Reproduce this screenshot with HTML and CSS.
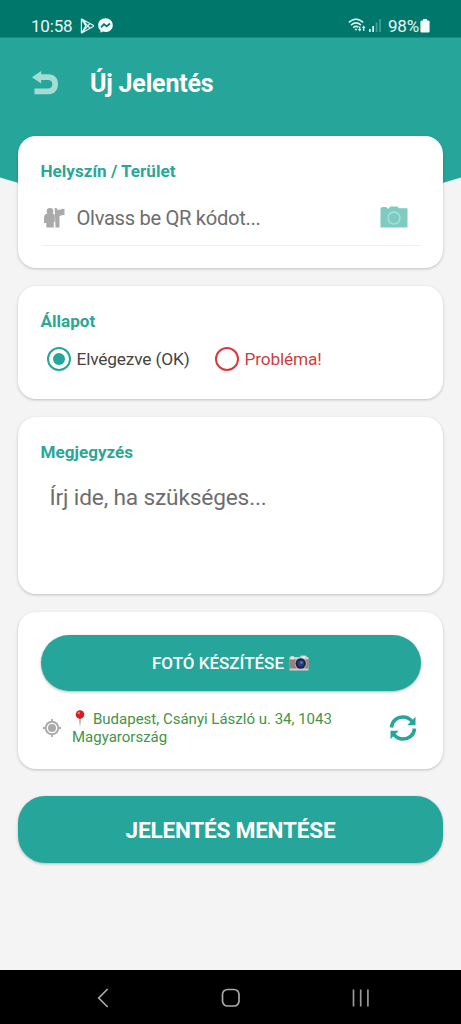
FILE: index.html
```html
<!DOCTYPE html>
<html lang="hu">
<head>
<meta charset="utf-8">
<meta name="viewport" content="width=device-width, initial-scale=1">
<title>Új Jelentés</title>
<link rel="stylesheet" href="styles.css">
</head>
<body>
<div class="screen">
  <div class="status-bar">
    <span class="clock">10:58</span>
    <svg class="play-icon" width="15" height="16" viewBox="0 0 16 17" fill="none" stroke="#e3f5f2" stroke-width="1.300" stroke-linejoin="round"><path d="M1.500 1.500Q1.500 .8 2.300 1.200L14 7.800Q14.800 8.400 14 9L2.300 15.800Q1.500 16.200 1.500 15.300ZM2 1.500L10.500 10.800M2 15.500L10.500 6M2 1.500L6.200 8.400L2 15.500"/></svg>
    <svg class="messenger-icon" width="15" height="15" viewBox="0 0 15 15"><path fill="#f2fbfa" d="M7.500.2C3.200.2.200 3.200.200 7.200c0 2.200.8 3.900 2.300 5.200v2.300l2.200-1.100c.9.200 1.800.4 2.800.4 4.300 0 7.300-2.900 7.300-6.800S11.800.2 7.500.2Z"/><path d="M3 9.300L6 6.100L8.700 8.400L12 5.500" fill="none" stroke="#00776b" stroke-width="1.700"/></svg>
    <span class="spacer"></span>
    <svg class="wifi-icon" width="19" height="15" viewBox="0 0 19 15" fill="none" stroke="#d8efec" stroke-width="1.500"><path d="M.8 4.400Q8 -2.200 15.200 4.400M3 7.100Q8 2.600 13 7.100M5.200 9.600Q8 7.200 10.500 9.400"/><path d="M6.500 11.200Q8 10 9.300 11.200L8 12.700Z" fill="#d8efec" stroke="none"/><path d="M11.700 8.500V12.500M15.700 13V9" stroke-width="1.300"/><path d="M9.800 11h3.800l-1.900 2.500ZM13.800 10h3.800l-1.900-2.500Z" fill="#d8efec" stroke="none"/></svg>
    <svg class="signal-icon" width="12" height="13" viewBox="0 0 12 13"><path d="M0 10h1.700v3H0ZM3.300 7H5v6H3.300Z" fill="#e3f5f2"/><path d="M6.700 3.500h1.700V13H6.700ZM10.200 0h1.700v13h-1.700Z" fill="#459f96"/></svg>
    <span class="battery-level">98%</span>
    <svg class="battery-icon" width="10" height="14" viewBox="0 0 10 14"><path d="M3 0h4v1.500h1.300Q9.600 1.500 9.600 2.800V12.200Q9.600 13.500 8.300 13.500H1.700Q.4 13.500.4 12.200V2.800Q.4 1.500 1.700 1.500H3Z" fill="#f2fbfa"/></svg>
  </div>

  <header class="app-header">
    <svg class="back-icon" width="27" height="24" viewBox="0 0 27 24"><path d="M0 6.300L9.200 0V3.200H16.500C22.500 3.200 26 7 26 13C26 19.500 22.300 23.200 16.500 23.200H2.500V17.500H16C19 17.500 20.300 16 20.300 13.300C20.300 10.500 18.900 9 16 9H9.200V12.500Z" fill="#a4dcd3"/></svg>
    <h1 class="title">Új Jelentés</h1>
  </header>

  <main class="content">
    <section class="card location-card">
      <h2 class="label">Helyszín / Terület</h2>
      <div class="scan-row">
        <svg class="guide-icon" width="21" height="20" viewBox="0 0 21 20" fill="#aaa"><circle cx="6" cy="3.300" r="3.300"/><path d="M3 5.500H9Q10.800 5.800 10.800 7.500V14H9.800V19.500H2.300V15H0V10Q0 6 3 5.500Z"/><path d="M10.700 0h2.200v1.200Q15 2.400 17 1.200Q18.500.2 20.500 1.100V7.200Q18.500 6.500 17 7.500L15.500 8V19.500H11.500Z"/></svg>
        <span class="scan-hint">Olvass be QR kódot...</span>
        <svg class="camera-icon" width="28" height="22" viewBox="0 0 28 22"><path d="M.5 2.500L2 1H6L7.500 2.500H9L10 .4H17.500L19 2.300H27.500V21.500H.5Z" fill="#7fcbc2"/><circle cx="14" cy="12" r="6" fill="none" stroke="#a7e3db" stroke-width="1.300"/></svg>
      </div>
    </section>

    <section class="card status-card">
      <h2 class="label">Állapot</h2>
      <div class="options">
        <span class="option"><span class="radio radio-selected"></span>Elvégezve (OK)</span>
        <span class="option option-problem"><span class="radio"></span>Probléma!</span>
      </div>
    </section>

    <section class="card note-card">
      <h2 class="label">Megjegyzés</h2>
      <p class="note-hint">Írj ide, ha szükséges...</p>
    </section>

    <section class="card photo-card">
      <div class="photo-button">
        <span>FOTÓ KÉSZÍTÉSE</span>
        <svg class="photo-icon" width="20" height="16" viewBox="0 0 20 16"><path d="M1.500 1H5V2H11L12 .5H17L18 2H19.500V15.500H.5V2H1.500Z" fill="#d2cdca"/><path d="M.5 4.500H19.500V13.500H.5Z" fill="#95817a"/><path d="M2 2.500H5V4H2ZM13 1.500H16V3H13Z" fill="#f5f0ea"/><circle cx="11.700" cy="8.500" r="6" fill="#c5bbc5"/><circle cx="11.700" cy="8.500" r="5.200" fill="#202143"/><circle cx="11.700" cy="8.500" r="3.200" fill="#253e83"/><circle cx="12.400" cy="7.500" r="1.300" fill="#4d86c0"/></svg>
      </div>
      <div class="address-row">
        <svg class="target-icon" width="18" height="18" viewBox="0 0 18 18" fill="none" stroke="#aaa"><circle cx="9" cy="9" r="6.300" stroke-width="1.900"/><circle cx="9" cy="9" r="4" fill="#aaa" stroke="none"/><path d="M9 0V3M9 15V18M0 9H3M15 9H18" stroke-width="1.800"/></svg>
        <p class="address"><svg class="pin-icon" width="10" height="16" viewBox="0 0 10 16"><path d="M4.300 8H5.700L5.300 15.500H4.700Z" fill="#8b9094"/><circle cx="5" cy="4.500" r="4.300" fill="#d51f25"/><circle cx="3.800" cy="3" r="1.200" fill="#f47b78"/></svg>Budapest, Csányi László u. 34, 1043<br>Magyarország</p>
        <svg class="refresh-icon" width="28" height="26" viewBox="0 0 28 26"><path d="M2.500 12.500C3 5.500 8.500 2 14 2C18 2 21 3.800 23 6.500M25.500 13.500C25 20.500 19.500 24 14 24C10 24 7 22.200 5 19.500" fill="none" stroke="#26a69a" stroke-width="3.600"/><path d="M26.500 1.800V10.200H18.300ZM1.500 24.200V15.800H9.700Z" fill="#26a69a"/></svg>
      </div>
    </section>

    <div class="save-button">JELENTÉS MENTÉSE</div>
  </main>

  <nav class="nav-bar">
    <svg width="12" height="20" viewBox="0 0 12 20" fill="none" stroke="#aaa" stroke-width="1.700"><path d="M10.700 1L1.700 10L10.700 19"/></svg>
    <svg width="20" height="20" viewBox="0 0 20 20" fill="none" stroke="#aaa" stroke-width="1.700"><rect x="1.500" y="1.500" width="16.500" height="16.500" rx="5"/></svg>
    <svg width="18" height="18" viewBox="0 0 18 18" stroke="#999" stroke-width="1.700"><path d="M1.500 .5V17.500M8.700 .5V17.500M15.900 .5V17.500"/></svg>
  </nav>
</div>
</body>
</html>
```
FILE: styles.css
```css
* { box-sizing: border-box; }
body { margin: 0; font-family: Roboto, sans-serif; background: #f4f4f4; }
h1, h2, p { margin: 0; }
svg { display: block; flex: none; }
.screen { height: 1024px; display: flex; flex-direction: column; overflow: hidden; background: #f4f4f4; }
.status-bar { flex: none; height: 38px; padding: 14px 31px 0; display: flex; align-items: center; background: #00776b; color: #e8f6f4; border-bottom: 1px solid #148c80; }
.clock { font-size: 17px; letter-spacing: -.2px; width: 49px; line-height: 22px; }
.messenger-icon { margin-left: 3px; }
.spacer { flex: 1; }
.signal-icon { margin: 0 7px 0 2px; }
.battery-level { font-size: 17px; letter-spacing: -.2px; line-height: 22px; width: 32px; white-space: nowrap; }
.app-header { flex: none; height: 167px; padding: 24px 32px 0; display: flex; align-items: flex-start; background: #26a69a; clip-path: polygon(0 0, 100% 0, 100% 139.500px, 96% 145px, 85% 156px, 70% 163px, 50% 167px, 30% 163px, 15% 156px, 4% 145px, 0 139.500px); }
.back-icon { margin-top: 9px; }
.title { margin-left: 31px; font-size: 25px; letter-spacing: -.2px; line-height: 44px; font-weight: 700; color: #fff; white-space: nowrap; }
.content { position: relative; flex: 1; margin-top: -69px; padding: 0 18px; display: flex; flex-direction: column; gap: 18px; }
.card { flex: none; background: #fff; border-radius: 18px; padding: 23px 22.500px 0; box-shadow: 0 1px 3px rgba(0,0,0,.22); }
.location-card { height: 132px; }
.status-card { height: 113px; }
.note-card { height: 177px; }
.photo-card { height: 157px; }
.label { font-size: 17.100px; line-height: 24px; font-weight: 700; color: #2ba797; white-space: nowrap; }
.scan-row { height: 63px; display: flex; align-items: center; padding: 8px 12.500px 0 3px; border-bottom: 1px solid #f0f0f0; }
.scan-hint { flex: 1; margin-left: 12px; font-size: 20.200px; letter-spacing: -.33px; color: #6e6e6e; white-space: nowrap; }
.camera-icon { margin-top: -2px; }
.options { display: flex; gap: 25px; margin: 14px 0 0 6px; }
.option { display: flex; align-items: center; gap: 6px; font-size: 17.300px; letter-spacing: -.16px; line-height: 24px; color: #444; white-space: nowrap; }
.option-problem { color: #cc3f40; }
.radio { width: 24px; height: 24px; border: 2.500px solid #d63a3c; border-radius: 50%; display: grid; place-items: center; }
.radio-selected { border-color: #26a69a; }
.radio-selected::after { content: ""; width: 12px; height: 12px; border-radius: 50%; background: #26a69a; }
.note-hint { margin: 20px 0 0 9px; font-size: 22.700px; letter-spacing: -.16px; line-height: 28px; color: #6e6e6e; white-space: nowrap; }
.photo-button { height: 56px; border-radius: 28px; background: #26a69a; color: #fff; font-size: 17px; font-weight: 500; display: flex; align-items: center; justify-content: center; gap: 5px; box-shadow: 0 1px 3px rgba(0,0,0,.3); }
.address-row { display: flex; align-items: center; height: 38px; margin-top: 18px; padding: 0 4px 0 2px; }
.target-icon { margin-top: -1px; }
.address { flex: 1; margin-left: 11.500px; font-size: 15px; line-height: 18px; color: #439447; white-space: nowrap; }
.pin-icon { display: inline-block; vertical-align: -2px; margin: 0 8px 0 3px; }
.save-button { flex: none; height: 67px; margin-top: 9px; border-radius: 27px; background: #26a69a; color: #fff; font-size: 22.500px; letter-spacing: -.18px; font-weight: 700; display: flex; align-items: center; justify-content: center; box-shadow: 0 1px 3px rgba(0,0,0,.25); }
.nav-bar { flex: none; height: 54px; padding: 2px 91px 0 97px; background: #000; display: flex; align-items: center; justify-content: space-between; }
```
